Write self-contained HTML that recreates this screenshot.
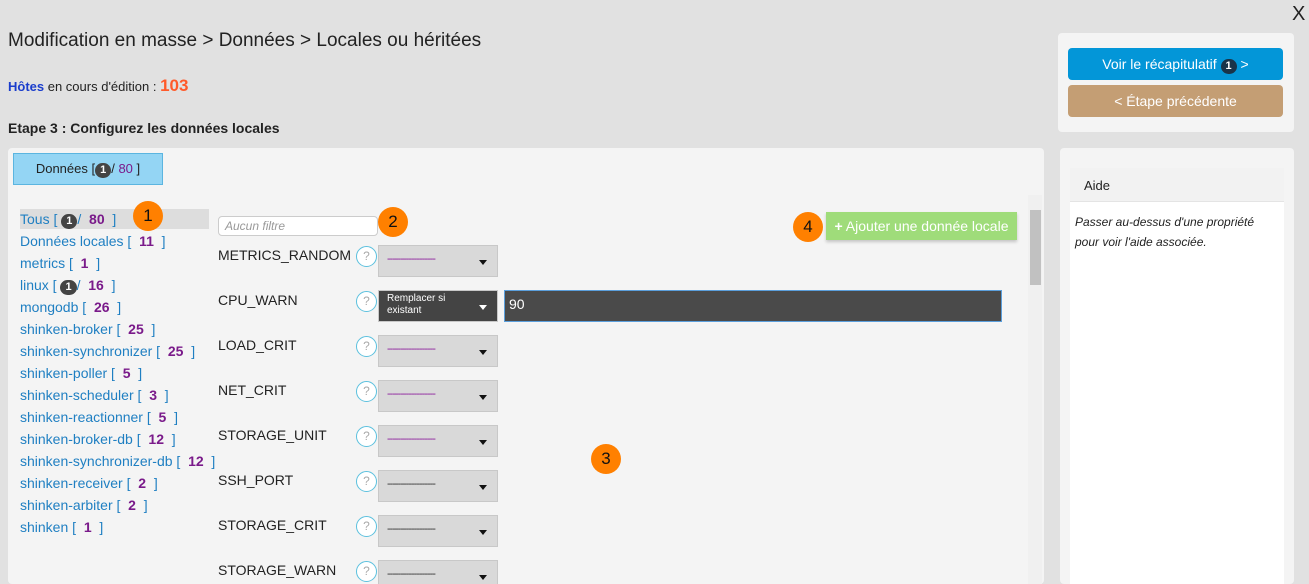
<!DOCTYPE html><html><head><meta charset="utf-8"><style>
html{overflow:hidden}
body{margin:0;width:1309px;height:584px;background:#e1e1e1;font-family:"Liberation Sans",sans-serif;position:relative;overflow:hidden;color:#222}
.a{position:absolute}
.num{display:inline-block;background:#444;color:#fff;border-radius:8px;font-size:11px;font-weight:bold;padding:0 5px;line-height:15px}
.p{color:#7a1a8a;font-weight:bold}
.li{position:absolute;left:20px;font-size:14px;color:#1f7fc2}
.lbl{position:absolute;left:218px;font-size:14px;color:#222}
.q{position:absolute;left:356px;width:19px;height:19px;border:1.5px solid #5bc0de;border-radius:50%;color:#aaa;font-size:12px;text-align:center;line-height:19px;background:#fff}
.sel{position:absolute;left:378px;width:120px;height:32px;background:#d9d9d9;border:1px solid #c8c8c8;box-sizing:border-box}
.sel span{position:absolute;left:8px;top:7px;color:#8a1a9a;font-size:11px;letter-spacing:-1px}
.sel i{position:absolute;right:10px;top:14px;border:4px solid transparent;border-top:5px solid #111}
.o{position:absolute;width:30px;height:30px;border-radius:50%;background:#ff8000;color:#111;font-size:17px;text-align:center;line-height:30px}
</style></head><body>
<div class="a" style="left:1292px;top:3px;font-size:20px">X</div>
<div class="a" style="left:8px;top:30px;font-size:19px;color:#222">Modification en masse &gt; Données &gt; Locales ou héritées</div>
<div class="a" style="left:8px;top:76px;font-size:13px"><b style="color:#1a3dcc">Hôtes</b> en cours d'édition : <b style="color:#ff5a2a;font-size:17px">103</b></div>
<div class="a" style="left:8px;top:120px;font-size:14px;font-weight:bold">Etape 3 : Configurez les données locales</div>

<div class="a" style="left:1058px;top:33px;width:236px;height:99px;background:#f4f4f4;border-radius:4px"></div>
<div class="a" style="left:1068px;top:48px;width:215px;height:32px;background:#0396d8;border-radius:4px;color:#fff;font-size:14px;text-align:center;line-height:32px">Voir le récapitulatif <span class="num" style="background:#1a3348">1</span> &gt;</div>
<div class="a" style="left:1068px;top:85px;width:215px;height:32px;background:#c49e74;border-radius:4px;color:#fff;font-size:14px;text-align:center;line-height:32px">&lt; Étape précédente</div>

<div class="a" style="left:1060px;top:148px;width:234px;height:436px;background:#f4f4f4;border-radius:4px"></div>
<div class="a" style="left:1070px;top:168px;width:214px;height:416px;background:#fff"></div>
<div class="a" style="left:1070px;top:168px;width:214px;height:34px;background:#f2f2f2;border-bottom:1px solid #e4e4e4;box-sizing:border-box"><span style="position:absolute;left:14px;top:10px;font-size:13px">Aide</span></div>
<div class="a" style="left:1075px;top:212px;width:205px;font-size:12px;font-style:italic;line-height:20px">Passer au-dessus d'une propriété pour voir l'aide associée.</div>

<div class="a" style="left:8px;top:148px;width:1036px;height:436px;background:#f4f4f4;border-radius:4px"></div>
<div class="a" style="left:13px;top:153px;width:150px;height:32px;background:#94d5f4;border:1px solid #5bb5e0;box-sizing:border-box;text-align:center;line-height:30px;font-size:13px">Données [<span class="num">1</span>/ <span style="color:#7a1a8a">80</span> ]</div>

<div class="a" style="left:20px;top:209px;width:189px;height:20px;background:#ddd"></div>
<div class="li" style="top:211px">Tous [ <span class="num">1</span>/ &nbsp;<span class="p">80</span> &nbsp;]</div>
<div class="li" style="top:233px">Données locales [ &nbsp;<span class="p">11</span> &nbsp;]</div>
<div class="li" style="top:255px">metrics [ &nbsp;<span class="p">1</span> &nbsp;]</div>
<div class="li" style="top:277px">linux [ <span class="num">1</span>/ &nbsp;<span class="p">16</span> &nbsp;]</div>
<div class="li" style="top:299px">mongodb [ &nbsp;<span class="p">26</span> &nbsp;]</div>
<div class="li" style="top:321px">shinken-broker [ &nbsp;<span class="p">25</span> &nbsp;]</div>
<div class="li" style="top:343px">shinken-synchronizer [ &nbsp;<span class="p">25</span> &nbsp;]</div>
<div class="li" style="top:365px">shinken-poller [ &nbsp;<span class="p">5</span> &nbsp;]</div>
<div class="li" style="top:387px">shinken-scheduler [ &nbsp;<span class="p">3</span> &nbsp;]</div>
<div class="li" style="top:409px">shinken-reactionner [ &nbsp;<span class="p">5</span> &nbsp;]</div>
<div class="li" style="top:431px">shinken-broker-db [ &nbsp;<span class="p">12</span> &nbsp;]</div>
<div class="li" style="top:453px">shinken-synchronizer-db [ &nbsp;<span class="p">12</span> &nbsp;]</div>
<div class="li" style="top:475px">shinken-receiver [ &nbsp;<span class="p">2</span> &nbsp;]</div>
<div class="li" style="top:497px">shinken-arbiter [ &nbsp;<span class="p">2</span> &nbsp;]</div>
<div class="li" style="top:519px">shinken [ &nbsp;<span class="p">1</span> &nbsp;]</div>

<div class="o" style="left:133px;top:201px">1</div>
<div class="a" style="left:218px;top:216px;width:160px;height:20px;background:#fff;border:1px solid #ccc;border-radius:4px;box-sizing:border-box;font-size:12px;font-style:italic;color:#999;padding:2px 6px">Aucun filtre</div>
<div class="o" style="left:378px;top:207px">2</div>
<div class="o" style="left:591px;top:444px">3</div>
<div class="o" style="left:793px;top:212px">4</div>
<div class="a" style="left:826px;top:212px;width:191px;height:28px;background:#9fdc7a;color:#fff;font-size:14px;text-align:center;line-height:28px;box-shadow:0 2px 3px rgba(0,0,0,.2)"><b>+</b> Ajouter une donnée locale</div>

<div class="a" style="left:1028px;top:195px;width:14px;height:389px;background:#f0f0f0"></div>
<div class="a" style="left:1030px;top:210px;width:11px;height:75px;background:#c1c1c1"></div>

<div class="lbl" style="top:247px">METRICS_RANDOM</div><div class="q" style="top:246px">?</div><div class="sel" style="top:245px"><span>------------------</span><i></i></div>
<div class="lbl" style="top:292px">CPU_WARN</div><div class="q" style="top:291px">?</div>
<div class="sel" style="top:290px;background:#444"><span style="color:#fff;top:2px;font-size:10px;line-height:12px;letter-spacing:0">Remplacer si<br>existant</span><i style="border-top-color:#fff"></i></div>
<div class="a" style="left:504px;top:290px;width:498px;height:32px;background:#4a4a4a;border:1px solid #5b9fdc;box-sizing:border-box;color:#fff;font-size:14px;padding:5px 4px">90</div>
<div class="lbl" style="top:337px">LOAD_CRIT</div><div class="q" style="top:336px">?</div><div class="sel" style="top:335px"><span>------------------</span><i></i></div>
<div class="lbl" style="top:382px">NET_CRIT</div><div class="q" style="top:381px">?</div><div class="sel" style="top:380px"><span>------------------</span><i></i></div>
<div class="lbl" style="top:427px">STORAGE_UNIT</div><div class="q" style="top:426px">?</div><div class="sel" style="top:425px"><span>------------------</span><i></i></div>
<div class="lbl" style="top:472px">SSH_PORT</div><div class="q" style="top:471px">?</div><div class="sel" style="top:470px"><span style="color:#333">------------------</span><i></i></div>
<div class="lbl" style="top:517px">STORAGE_CRIT</div><div class="q" style="top:516px">?</div><div class="sel" style="top:515px"><span style="color:#333">------------------</span><i></i></div>
<div class="lbl" style="top:562px">STORAGE_WARN</div><div class="q" style="top:561px">?</div><div class="sel" style="top:560px"><span style="color:#333">------------------</span><i></i></div>
</body></html>
